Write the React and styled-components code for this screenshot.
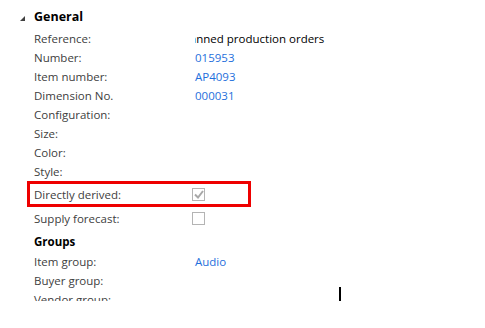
import styled, { createGlobalStyle } from 'styled-components';

const GlobalStyle = createGlobalStyle`
  html, body {
    margin: 0;
    padding: 0;
    background: #fff;
  }
  body {
    font-family: "Open Sans", "Noto Sans", sans-serif;
    font-size: 11.5px;
    color: #404040;
  }
`;

const Page = styled.div`
  position: relative;
  width: 485px;
  height: 328px;
  overflow: hidden;
  background: #fff;
`;

const Panel = styled.div`
  height: 301px;
  overflow: hidden;
  padding-top: 6px;
  box-sizing: border-box;
`;

const SectionHeader = styled.div`
  display: flex;
  align-items: center;
  height: 20px;
  padding-left: 20px;
  gap: 9px;
  font-weight: 700;
  font-size: 12.5px;
  color: #000;
`;

const Fields = styled.div`
  padding-left: 34px;
  display: flex;
  flex-direction: column;
  margin-top: 3px;
`;

const Row = styled.div`
  display: grid;
  grid-template-columns: 161px 1fr;
  align-items: center;
  height: ${(p) => p.$height || 19}px;
`;

const HighlightRow = styled.div`
  display: grid;
  grid-template-columns: 161px 1fr;
  align-items: center;
  width: 224px;
  height: 26px;
  box-sizing: border-box;
  margin-left: -7px;
  padding-left: 4px;
  border: 3px solid #ee0000;
  grid-template-columns: 161px 1fr;
`;

const Label = styled.span`
  white-space: nowrap;
  color: #404040;
`;

const GroupTitle = styled.div`
  display: flex;
  align-items: center;
  height: 22px;
  font-weight: 700;
  color: #000;
`;

const Value = styled.span`
  color: ${(p) => (p.$link ? '#1f6fdc' : '#000')};
  white-space: nowrap;
`;

const Scroll = styled.div`
  overflow: hidden;
  width: 200px;
  white-space: nowrap;
  color: #000;
  padding-left: 1px;
`;

const Shifted = styled.span`
  display: inline-block;
  margin-left: -16px;
`;

const Box = styled.span`
  display: flex;
  align-items: center;
  justify-content: center;
  width: 13px;
  height: 13px;
  box-sizing: border-box;
  border: 1px solid #b4b4b4;
  margin-left: -3px;
  background: #fff;
`;

const Caret = styled.div`
  position: absolute;
  left: 339px;
  top: 287px;
  width: 2px;
  height: 14px;
  background: #000;
`;

const Triangle = () => (
  <svg width="5" height="5" viewBox="0 0 5 5" style={{ marginTop: 4 }}>
    <polygon points="5,0 5,5 0,5" fill="#404040" />
  </svg>
);

const Check = () => (
  <svg width="10" height="9" viewBox="0 0 10 9">
    <path d="M1 4.5 L4 7.5 L9 1" fill="none" stroke="#a8a8a8" strokeWidth="2" />
  </svg>
);

const general = [
  { label: 'Reference:', scrolled: 'Planned production orders' },
  { label: 'Number:', value: '015953' },
  { label: 'Item number:', value: 'AP4093' },
  { label: 'Dimension No.', value: '000031' },
  { label: 'Configuration:' },
  { label: 'Size:' },
  { label: 'Color:' },
  { label: 'Style:' },
];

const groups = [
  { label: 'Item group:', value: 'Audio' },
  { label: 'Buyer group:' },
  { label: 'Vendor group:' },
];

export default function App() {
  return (
    <>
      <GlobalStyle />
      <Page>
        <Panel>
          <SectionHeader>
            <Triangle />
            General
          </SectionHeader>
          <Fields>
            {general.map((f) => (
              <Row key={f.label}>
                <Label>{f.label}</Label>
                {f.scrolled ? (
                  <Scroll>
                    <Shifted>{f.scrolled}</Shifted>
                  </Scroll>
                ) : (
                  f.value && <Value $link>{f.value}</Value>
                )}
              </Row>
            ))}
            <HighlightRow>
              <Label>Directly derived:</Label>
              <Box>
                <Check />
              </Box>
            </HighlightRow>
            <Row $height={23}>
              <Label>Supply forecast:</Label>
              <Box />
            </Row>
            <GroupTitle>Groups</GroupTitle>
            {groups.map((f) => (
              <Row key={f.label}>
                <Label>{f.label}</Label>
                {f.value && <Value $link>{f.value}</Value>}
              </Row>
            ))}
          </Fields>
        </Panel>
        <Caret />
      </Page>
    </>
  );
}
